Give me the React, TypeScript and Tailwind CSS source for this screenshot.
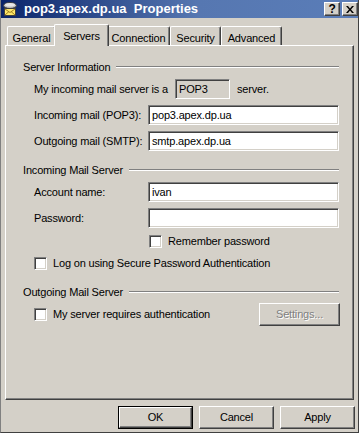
import React from "react";

const FONT = { fontFamily: '"Liberation Sans", Arial, sans-serif' };

function Sunken({ children, className = "" }: { children?: React.ReactNode; className?: string }) {
  return (
    <div
      className={
        "border border-t-[#808080] border-l-[#808080] border-b-white border-r-white shadow-[inset_1px_1px_0_#404040,inset_-1px_-1px_0_#d4d0c8] " +
        className
      }
    >
      {children}
    </div>
  );
}

function Input({ value }: { value?: string }) {
  return (
    <Sunken className="w-[191px] h-[20px] bg-white flex items-center pl-[3px] text-[11px] text-black">
      {value}
    </Sunken>
  );
}

function Check({ label, className = "" }: { label: string; className?: string }) {
  return (
    <div className={"flex items-center " + className}>
      <Sunken className="w-[13px] h-[13px] bg-white" />
      <span className="ml-[6px] text-[11px] text-black leading-none">{label}</span>
    </div>
  );
}

function Section({ title, className = "" }: { title: string; className?: string }) {
  return (
    <div className={"flex items-center h-[14px] " + className}>
      <span className="text-[11px] text-black whitespace-nowrap">{title}</span>
      <div className="ml-[6px] flex-1 mr-[14px] h-[2px] border-t border-t-[#808080] border-b border-b-white" />
    </div>
  );
}

function Button({ label, def = false, disabled = false, className = "" }: { label: string; def?: boolean; disabled?: boolean; className?: string }) {
  const inner = (
    <div
      className={
        "h-full w-full flex items-center justify-center border border-t-white border-l-white border-b-[#404040] border-r-[#404040] shadow-[inset_-1px_-1px_0_#808080] text-[11px] " +
        (disabled ? "text-[#808080] [text-shadow:1px_1px_0_#ffffff]" : "text-black")
      }
    >
      {label}
    </div>
  );
  if (def)
    return <div className={"border border-black " + className}>{inner}</div>;
  return <div className={className}>{inner}</div>;
}

function Tab({ label, selected = false, w }: { label: string; selected?: boolean; w: string }) {
  if (selected)
    return (
      <div
        className={
          "relative z-10 -mx-[2px] h-[22px] -mb-[1px] bg-[#d4d0c8] border-t border-l border-t-white border-l-white border-r border-r-[#404040] rounded-tl-[2px] rounded-tr-[2px] shadow-[inset_-1px_0_0_#808080] flex items-start justify-center pt-[3px] text-[11px] text-black " +
          w
        }
      >
        {label}
      </div>
    );
  return (
    <div
      className={
        "h-[19px] bg-[#d4d0c8] border-t border-l border-t-white border-l-white border-r border-r-[#404040] rounded-tl-[2px] rounded-tr-[2px] shadow-[inset_-1px_0_0_#808080] flex items-start justify-center pt-[3px] text-[11px] text-black " +
        w
      }
    >
      {label}
    </div>
  );
}

function AppIcon() {
  return (
    <svg width="16" height="16" viewBox="0 0 16 16">
      <ellipse cx="8" cy="4.5" rx="6.5" ry="3" fill="#c0c0c0" stroke="#404040" strokeWidth="1" />
      <ellipse cx="8" cy="3.8" rx="5" ry="1.8" fill="#e8e8e8" />
      <rect x="2.5" y="7.5" width="11" height="7" fill="#ffe86a" stroke="#404040" strokeWidth="1" />
      <path d="M3 8 L8 11.5 L13 8" fill="none" stroke="#a08020" strokeWidth="1" />
      <path d="M3 14 L7 10.5 M13 14 L9 10.5" fill="none" stroke="#a08020" strokeWidth="1" />
    </svg>
  );
}

function TitleBtn({ children }: { children: React.ReactNode }) {
  return (
    <div className="w-[16px] h-[14px] bg-[#d4d0c8] border border-t-white border-l-white border-b-[#404040] border-r-[#404040] shadow-[inset_-1px_-1px_0_#808080] flex items-center justify-center text-[12px] font-bold text-black leading-none">
      {children}
    </div>
  );
}

export default function App() {
  return (
    <div style={FONT} className="w-[359px] h-[433px] bg-[#d4d0c8] flex flex-col border-r border-r-[#404040] border-b border-b-[#404040] border-l border-l-[#808080] overflow-hidden tracking-[-0.17px]">
      {/* Title bar */}
      <div className="h-[18px] flex items-center bg-[linear-gradient(to_right,#0a246a,#5677b1_55%,#5a7db8)] pl-[2px] pr-[1px] -mr-[1px] -ml-[1px]">
        <AppIcon />
        <span className="ml-[6px] text-[13px] font-bold text-white whitespace-pre tracking-normal">pop3.apex.dp.ua  Properties</span>
        <div className="flex-1" />
        <TitleBtn>?</TitleBtn>
        <div className="w-[2px]" />
        <TitleBtn>
          <svg width="8" height="7" viewBox="0 0 8 7">
            <path d="M0 0 L2 0 L4 2.5 L6 0 L8 0 L5 3.5 L8 7 L6 7 L4 4.5 L2 7 L0 7 L3 3.5 Z" fill="#000" />
          </svg>
        </TitleBtn>
      </div>

      {/* Tabs */}
      <div className="mt-[6px] h-[21px] flex items-end pl-[6px]">
        <Tab label="General" w="w-[49px]" />
        <Tab label="Servers" w="w-[55px]" selected />
        <Tab label="Connection" w="w-[63px]" />
        <Tab label="Security" w="w-[51px]" />
        <Tab label="Advanced" w="w-[61px]" />
      </div>

      {/* Panel */}
      <div className="ml-[4px] w-[349px] h-[355px] border border-t-white border-l-white border-b-[#404040] border-r-[#404040] shadow-[inset_-1px_-1px_0_#808080] pl-[17px] pt-[14px] flex flex-col">
        <Section title="Server Information" />
        <div className="mt-[5px] ml-[11px] flex items-center h-[20px] text-[11px] text-black">
          <span className="w-[141px]">My incoming mail server is a</span>
          <Sunken className="w-[55px] h-[20px] bg-[#d4d0c8] flex items-center pl-[3px]">POP3</Sunken>
          <span className="ml-[7px]">server.</span>
        </div>
        <div className="mt-[6px] ml-[11px] flex items-center h-[20px] text-[11px] text-black">
          <span className="w-[114px]">Incoming mail (POP3):</span>
          <Input value="pop3.apex.dp.ua" />
        </div>
        <div className="mt-[6px] ml-[11px] flex items-center h-[20px] text-[11px] text-black">
          <span className="w-[114px]">Outgoing mail (SMTP):</span>
          <Input value="smtp.apex.dp.ua" />
        </div>

        <Section title="Incoming Mail Server" className="mt-[12px]" />
        <div className="mt-[5px] ml-[11px] flex items-center h-[20px] text-[11px] text-black">
          <span className="w-[114px]">Account name:</span>
          <Input value="ivan" />
        </div>
        <div className="mt-[6px] ml-[11px] flex items-center h-[20px] text-[11px] text-black">
          <span className="w-[114px]">Password:</span>
          <Input />
        </div>
        <Check label="Remember password" className="mt-[7px] ml-[126px] h-[13px]" />
        <Check label="Log on using Secure Password Authentication" className="mt-[9px] ml-[11px] h-[13px]" />

        <Section title="Outgoing Mail Server" className="mt-[15px]" />
        <div className="mt-[4px] ml-[11px] flex items-center h-[23px]">
          <Check label="My server requires authentication" className="h-[13px]" />
          <div className="flex-1" />
          <Button label="Settings..." disabled className="w-[81px] h-[23px] mr-[13px]" />
        </div>
      </div>

      {/* Bottom buttons */}
      <div className="mt-[6px] flex justify-end gap-[6px] pr-[3px]">
        <Button label="OK" def className="w-[75px] h-[23px]" />
        <Button label="Cancel" className="w-[75px] h-[23px]" />
        <Button label="Apply" className="w-[75px] h-[23px]" />
      </div>
    </div>
  );
}
